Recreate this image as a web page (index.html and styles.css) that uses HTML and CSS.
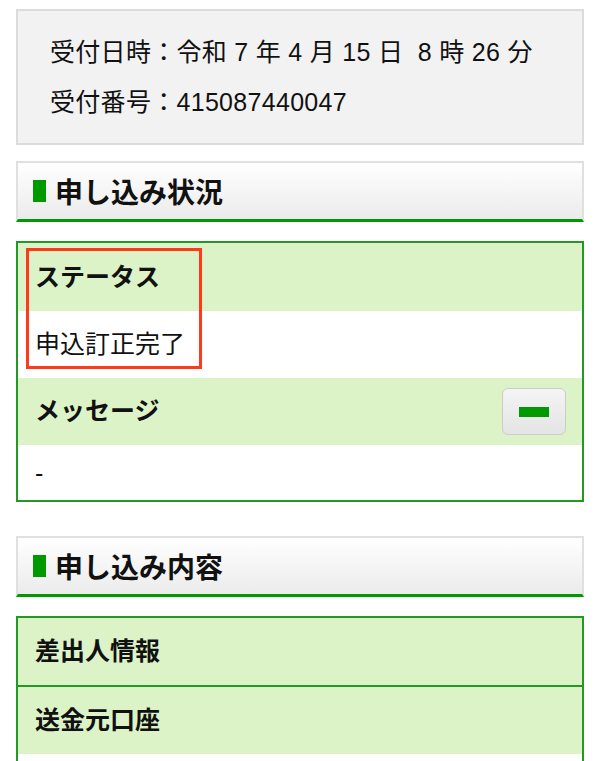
FILE: index.html
```html
<!DOCTYPE html>
<html lang="ja">
<head>
    <meta charset="UTF-8">
    <meta name="viewport" content="width=device-width, initial-scale=1.0">
    <title>申し込み状況</title>
    <link rel="stylesheet" href="styles.css">
</head>
<body>
    <div class="receipt">
        <p>受付日時：令和 7 年 4 月 15 日&nbsp; 8 時 26 分</p>
        <p>受付番号：415087440047</p>
    </div>

    <h2 class="section-title"><span class="mark"></span>申し込み状況</h2>

    <div class="panel status-panel">
        <div class="row head">ステータス</div>
        <div class="row body">申込訂正完了</div>
        <div class="row head with-btn">
            メッセージ
            <button class="toggle" type="button"><span class="bar"></span></button>
        </div>
        <div class="row body last">-</div>
        <div class="highlight"></div>
    </div>

    <h2 class="section-title second"><span class="mark"></span>申し込み内容</h2>

    <div class="panel">
        <div class="row head divided">差出人情報</div>
        <div class="row head">送金元口座</div>
        <div class="row body">&nbsp;</div>
    </div>
</body>
</html>
```

FILE: styles.css
```css
body {
    margin: 0;
    padding: 9px 16px 0;
    font-family: "Liberation Sans", "Noto Sans CJK JP", sans-serif;
    color: #111;
    background: #fff;
}
.receipt {
    background: #f2f2f2;
    border: 2px solid #dcdcdc;
    padding: 16px 0 16px 32px;
    font-size: 25px;
    letter-spacing: 0.3px;
}
.receipt p {
    margin: 0;
    line-height: 50px;
}
.section-title {
    display: flex;
    align-items: center;
    margin: 16px 0 0;
    height: 56px;
    padding-left: 15px;
    font-size: 28px;
    font-weight: bold;
    background: linear-gradient(#ffffff, #ebebeb);
    border: 2px solid #e0e0e0;
    border-bottom: 3px solid #009900;
}
.section-title.second {
    margin-top: 34px;
}
.mark {
    width: 13px;
    height: 22px;
    background: #009900;
    margin-right: 9px;
}
.panel {
    position: relative;
    margin-top: 19px;
    border: 2px solid #229922;
}
.row {
    padding: 0 17px;
    font-size: 25px;
    line-height: 67px;
    height: 67px;
}
.row.head {
    background: #dbf3c6;
    font-weight: bold;
}
.row.divided {
    border-bottom: 2px solid #229922;
}
.status-panel .row:first-child {
    height: 68px;
    line-height: 68px;
}
.row.last {
    height: 55px;
    line-height: 57px;
}
.with-btn {
    display: flex;
    align-items: center;
    justify-content: space-between;
}
.toggle {
    width: 64px;
    height: 47px;
    margin-right: -1px;
    border: 1px solid #cccccc;
    border-radius: 6px;
    background: linear-gradient(#f4f4f4, #e4e4e4);
    display: flex;
    align-items: center;
    justify-content: center;
    padding: 0;
}
.toggle .bar {
    width: 30px;
    height: 10px;
    background: #009900;
}
.highlight {
    position: absolute;
    left: 8px;
    top: 5px;
    width: 170px;
    height: 115px;
    border: 3px solid #ff3a1a;
}
```
